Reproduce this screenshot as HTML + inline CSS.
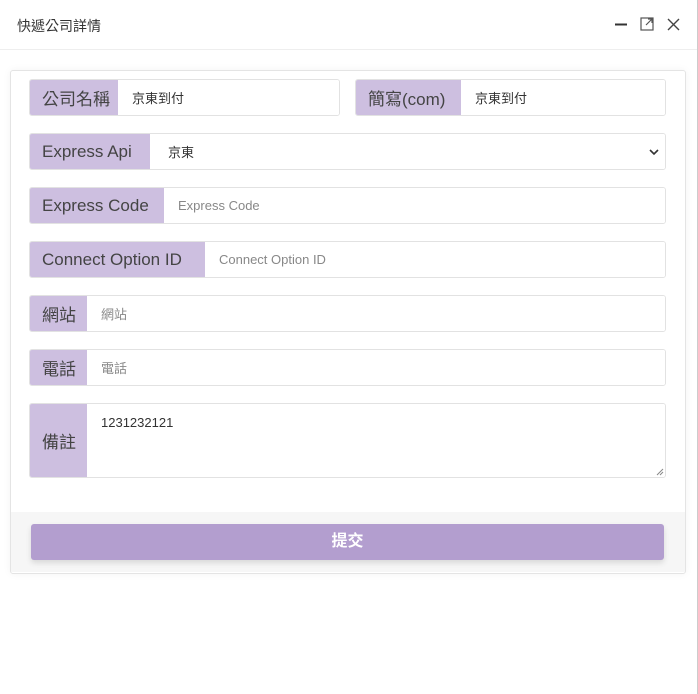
<!DOCTYPE html><html><head><meta charset="utf-8"><style>
body{margin:0;width:698px;height:694px;background:#fff;font-family:"Liberation Sans","Noto Sans CJK TC",sans-serif;position:relative;overflow:hidden}
.hdr{position:absolute;left:0;top:0;width:697px;height:49px;border-bottom:1px solid #eee;}
.hdr .t{position:absolute;left:17px;top:16px;font-size:14px;color:#333}
.rb{position:absolute;right:0;top:0;width:1px;height:694px;background:#ccc}
.card{position:absolute;left:10px;top:70px;width:674px;height:502px;border:1px solid #e4e4e4;border-radius:3px;box-shadow:0 0 8px rgba(0,0,0,.05)}
.row{position:absolute;height:37px;display:flex;border:1px solid #e2e2e2;border-radius:3px;box-sizing:border-box;overflow:hidden}
.lab{background:#cdbfe0;color:#444;font-size:17px;display:flex;align-items:center;padding:0 12px;white-space:nowrap}
.val{flex:1;display:flex;align-items:center;padding-left:14px;font-size:13px;color:#333;background:#fff}
.ph{color:#888}
.foot{position:absolute;left:11px;top:512px;width:674px;height:60px;background:#f6f6f6}
.btn{position:absolute;left:31px;top:524px;width:633px;height:36px;background:#b39ecf;border-radius:3px;color:#fff;font-size:16px;font-weight:bold;text-align:center;line-height:36px;box-shadow:0 3px 6px rgba(0,0,0,.12)}
</style></head><body>
<div class="hdr"><span class="t">快遞公司詳情</span>
<svg style="position:absolute;left:612px;top:15px" width="70" height="20"><path d="M3 9.5h12" stroke="#333" stroke-width="2"/><rect x="29" y="3" width="12" height="12" fill="none" stroke="#555" stroke-width="1.2"/><path d="M35 3v0M34 10l6-6M36 4h4v4" stroke="#555" stroke-width="1.2" fill="none"/><path d="M56 4l11 11M67 4l-11 11" stroke="#444" stroke-width="1.4"/></svg></div>
<div class="rb"></div>
<div class="card"></div>
<div class="row" style="left:29px;top:79px;width:311px"><div class="lab" style="width:64px">公司名稱</div><div class="val">京東到付</div></div>
<div class="row" style="left:355px;top:79px;width:311px"><div class="lab" style="width:81px">簡寫(com)</div><div class="val">京東到付</div></div>
<div class="row" style="left:29px;top:133px;width:637px"><div class="lab" style="width:96px">Express Api</div><div class="val" style="padding-left:18px">京東<svg style="margin-left:auto;margin-right:6px" width="10" height="8"><path d="M1 2l4 4 4-4" stroke="#333" stroke-width="1.6" fill="none"/></svg></div></div>
<div class="row" style="left:29px;top:187px;width:637px"><div class="lab" style="width:110px">Express Code</div><div class="val ph">Express Code</div></div>
<div class="row" style="left:29px;top:241px;width:637px"><div class="lab" style="width:151px">Connect Option ID</div><div class="val ph">Connect Option ID</div></div>
<div class="row" style="left:29px;top:295px;width:637px"><div class="lab" style="width:33px">網站</div><div class="val ph">網站</div></div>
<div class="row" style="left:29px;top:349px;width:637px"><div class="lab" style="width:33px">電話</div><div class="val ph">電話</div></div>
<div class="row" style="left:29px;top:403px;width:637px;height:75px"><div class="lab" style="width:33px">備註</div><div class="val" style="align-items:flex-start;padding-top:11px;position:relative">1231232121<svg style="position:absolute;right:1px;bottom:1px" width="8" height="8"><path d="M7 1L1 7M7 4L4 7" stroke="#888"/></svg></div></div>
<div class="foot"></div>
<div class="btn">提交</div>
</body></html>
